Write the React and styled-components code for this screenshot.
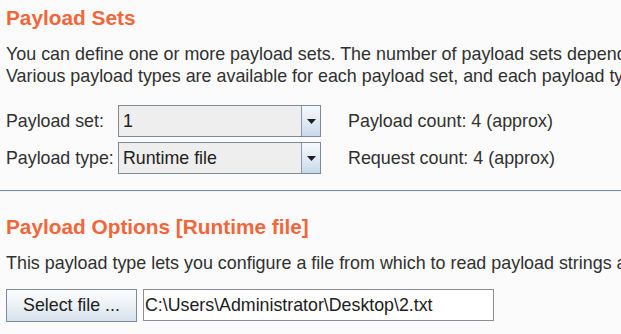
import React from 'react';
import styled, { createGlobalStyle } from 'styled-components';

const GlobalStyle = createGlobalStyle`
  html, body {
    margin: 0;
    padding: 0;
    background: #fbfbfb;
  }
  body {
    font-family: "Liberation Sans", Arial, sans-serif;
    color: #303030;
    overflow: hidden;
  }
`;

const Page = styled.div`
  width: 621px;
  height: 334px;
  overflow: hidden;
  background: #fbfbfb;
  padding-top: 6px;
  box-sizing: border-box;
`;

const Section = styled.section`
  padding-left: 6px;
  display: flex;
  flex-direction: column;
`;

const Heading = styled.h2`
  margin: 0;
  font-size: 20.8px;
  line-height: 24px;
  font-weight: bold;
  color: #f2663a;
  white-space: nowrap;
`;

const Text = styled.p`
  margin: 13px 0 0;
  font-size: 17.9px;
  line-height: 22px;
  white-space: nowrap;
`;

const FormGrid = styled.div`
  margin-top: 18px;
  display: grid;
  grid-template-columns: 112px 203px auto;
  grid-auto-rows: 32px;
  row-gap: 5px;
  align-items: center;
`;

const Label = styled.span`
  font-size: 17.8px;
  line-height: 22px;
  white-space: nowrap;
`;

const Count = styled.span`
  font-size: 17.9px;
  line-height: 22px;
  white-space: nowrap;
  padding-left: 27px;
`;

const Combo = styled.div`
  height: 32px;
  box-sizing: border-box;
  border: 1px solid #7d8a98;
  background: #eeeeee;
  display: flex;
  align-items: stretch;
`;

const ComboValue = styled.span`
  flex: 1;
  padding-left: 4px;
  font-size: 17.8px;
  line-height: 30px;
  color: #202020;
  white-space: nowrap;
`;

const ArrowButton = styled.span`
  width: 18px;
  border-left: 1px solid #8c9aa8;
  background: linear-gradient(#f6f9fc, #dfe9f3 55%, #c9d9ea);
  display: flex;
  align-items: center;
  justify-content: center;
`;

const Divider = styled.hr`
  margin: 16px 0 0;
  border: 0;
  border-top: 1px solid #7a8898;
  border-bottom: 1px solid #eaf5fd;
  height: 0;
`;

const OptionsSection = styled(Section)`
  margin-top: 23px;
`;

const FileRow = styled.div`
  margin-top: 15px;
  display: flex;
  gap: 6px;
  align-items: flex-start;
`;

const Button = styled.button`
  width: 131px;
  height: 33px;
  box-sizing: border-box;
  border: 1px solid #7d8a98;
  background: linear-gradient(#fbfcfd, #eef2f7 45%, #d6e1ec);
  font-family: "Liberation Sans", Arial, sans-serif;
  font-size: 17.8px;
  color: #202020;
  padding: 0;
`;

const FileField = styled.div`
  width: 351px;
  height: 32px;
  box-sizing: border-box;
  border: 1px solid #8a8f95;
  background: #ffffff;
  padding-left: 1px;
  font-size: 17.8px;
  line-height: 30px;
  color: #202020;
  white-space: nowrap;
`;

const Arrow = () => (
  <svg width="9" height="5" viewBox="0 0 9 5">
    <polygon points="0,0 9,0 4.5,5" fill="#1e1e1e" />
  </svg>
);

const ComboBox = ({ value }) => (
  <Combo>
    <ComboValue>{value}</ComboValue>
    <ArrowButton>
      <Arrow />
    </ArrowButton>
  </Combo>
);

export default function App() {
  return (
    <Page>
      <GlobalStyle />
      <Section>
        <Heading>Payload Sets</Heading>
        <Text>
          You can define one or more payload sets. The number of payload sets depends on the attack type defined in the Positions tab.
          <br />
          Various payload types are available for each payload set, and each payload type can be customized in different ways.
        </Text>
        <FormGrid>
          <Label>Payload set:</Label>
          <ComboBox value="1" />
          <Count>Payload count: 4 (approx)</Count>
          <Label>Payload type:</Label>
          <ComboBox value="Runtime file" />
          <Count>Request count: 4 (approx)</Count>
        </FormGrid>
      </Section>
      <Divider />
      <OptionsSection>
        <Heading>Payload Options [Runtime file]</Heading>
        <Text>This payload type lets you configure a file from which to read payload strings at runtime.</Text>
        <FileRow>
          <Button>Select file ...</Button>
          <FileField>C:\Users\Administrator\Desktop\2.txt</FileField>
        </FileRow>
      </OptionsSection>
    </Page>
  );
}
